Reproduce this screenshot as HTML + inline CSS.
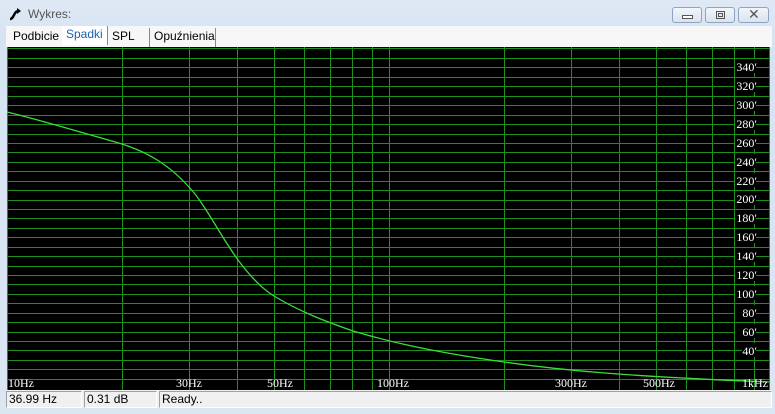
<!DOCTYPE html>
<html><head><meta charset="utf-8"><style>
*{margin:0;padding:0;box-sizing:border-box}
body{width:775px;height:414px;overflow:hidden;background:linear-gradient(#dfe9f5,#d6e3f2 40px,#dbe6f3);font-family:"Liberation Sans",sans-serif;position:relative}
.t{position:absolute;font-size:12px}
.btn{position:absolute;top:7px;height:16px;border:1px solid #8ea4c0;border-radius:3px;background:linear-gradient(#f2f6fb,#d9e3ef)}
.tabs{position:absolute;left:6px;top:26px;width:766px;height:21px;background:#f7f7f7}
.tab{position:absolute;top:2px;height:19px;font-size:12px;line-height:17px;color:#000;border-right:1px solid #888;padding:0 4px}
.status{position:absolute;left:6px;top:390px;width:766px;height:18px;background:#f0f0f0}
.sp{position:absolute;top:1px;height:17px;border:1px solid #a0a0a0;border-right-color:#fff;border-bottom-color:#fff;font-size:12px;line-height:15px;padding-left:2px}
</style></head><body>
<svg style="position:absolute;left:8px;top:7px" width="14" height="14" viewBox="0 0 14 14"><path d="M2 12 C4 12 5 10 6 8 C7 6 8 4 11 4" stroke="#000" stroke-width="2.5" fill="none"/><path d="M9 1 L13 4 L9 7 Z" fill="#000"/></svg>
<div class="t" style="left:28px;top:7px;color:#555">Wykres:</div>
<div class="btn" style="left:672px;width:30px"><div style="position:absolute;left:9px;top:7px;width:11px;height:4px;border:1px solid #555;background:#fff"></div></div>
<div class="btn" style="left:705px;width:30px"><div style="position:absolute;left:10px;top:3px;width:9px;height:8px;border:1px solid #555"></div><div style="position:absolute;left:12px;top:5px;width:5px;height:4px;border:1px solid #555"></div></div>
<div class="btn" style="left:738px;width:31px"><div style="position:absolute;left:9px;top:-2px;font-size:14px;color:#555">✕</div></div>
<div class="tabs">
<div class="tab" style="left:3px;width:53px;border-right:none">Podbicie</div>
<div class="tab" style="left:56px;top:0;width:46px;color:#1b62b0;background:#fff">Spadki</div>
<div class="tab" style="left:102px;width:42px">SPL</div>
<div class="tab" style="left:144px;width:66px">Opuźnienia</div>
</div>
<svg style="position:absolute;left:0;top:0" width="775" height="414">
<rect x="7" y="47" width="763" height="343" fill="#000"/>
<g stroke="#1c8f1c" stroke-width="1" shape-rendering="crispEdges">
<path d="M7 48.5H770 M7 58.5H770 M7 67.5H770 M7 77.5H770 M7 86.5H770 M7 96.5H770 M7 105.5H770 M7 115.5H770 M7 124.5H770 M7 134.5H770 M7 143.5H770 M7 152.5H770 M7 162.5H770 M7 171.5H770 M7 181.5H770 M7 190.5H770 M7 200.5H770 M7 209.5H770 M7 218.5H770 M7 228.5H770 M7 237.5H770 M7 247.5H770 M7 256.5H770 M7 266.5H770 M7 275.5H770 M7 284.5H770 M7 294.5H770 M7 303.5H770 M7 313.5H770 M7 322.5H770 M7 332.5H770 M7 341.5H770 M7 350.5H770 M7 360.5H770 M7 369.5H770 M7 379.5H770"/>
<path d="M7.5 47V390 M122.5 47V390 M189.5 47V390 M237.5 47V390 M274.5 47V390 M304.5 47V390 M330.5 47V390 M352.5 47V390 M372.5 47V390 M389.5 47V390 M504.5 47V390 M571.5 47V390 M619.5 47V390 M656.5 47V390 M686.5 47V390 M712.5 47V390 M734.5 47V390 M754.5 47V390 M769.5 47V390"/>
</g>
<g font-family="Liberation Serif,serif" font-size="12" fill="#fff">
<g fill="#000"><rect x="735" y="59" width="21" height="14"/><rect x="735" y="78" width="21" height="14"/><rect x="735" y="97" width="21" height="14"/><rect x="735" y="116" width="21" height="14"/><rect x="735" y="135" width="21" height="14"/><rect x="735" y="154" width="21" height="14"/><rect x="735" y="173" width="21" height="14"/><rect x="735" y="191" width="21" height="14"/><rect x="735" y="210" width="21" height="14"/><rect x="735" y="229" width="21" height="14"/><rect x="735" y="248" width="21" height="14"/><rect x="735" y="267" width="21" height="14"/><rect x="735" y="286" width="21" height="14"/><rect x="735" y="305" width="21" height="14"/><rect x="735" y="324" width="21" height="14"/><rect x="742" y="343" width="14" height="14"/></g>
<g text-anchor="end">
<text x="757" y="71">340′</text><text x="757" y="90">320′</text><text x="757" y="109">300′</text><text x="757" y="128">280′</text><text x="757" y="147">260′</text><text x="757" y="166">240′</text><text x="757" y="185">220′</text><text x="757" y="203">200′</text><text x="757" y="222">180′</text><text x="757" y="241">160′</text><text x="757" y="260">140′</text><text x="757" y="279">120′</text><text x="757" y="298">100′</text><text x="757" y="317">80′</text><text x="757" y="336">60′</text><text x="757" y="355">40′</text>
</g>
</g>
<path d="M7 112 C40 120 80 132 122 144 C150 153 170 166 189 187 C205 204 218 232 238 260 C250 276 262 289 274 296 C300 312 330 323 353 331 C380 339 420 350 504 362 C560 370 620 376 769 382" stroke="#3bdc3b" stroke-width="1.3" fill="none"/>
<g font-family="Liberation Serif,serif" font-size="12" fill="#fff">
<text x="8" y="387">10Hz</text><text x="176" y="387">30Hz</text><text x="267" y="387">50Hz</text><text x="377" y="387">100Hz</text><text x="555" y="387">300Hz</text><text x="643" y="387">500Hz</text><text x="742" y="387">1kHz</text>
</g>
</svg>
<div class="status">
<div class="sp" style="left:0;width:76px">36.99 Hz</div>
<div class="sp" style="left:78px;width:73px">0.31 dB</div>
<div class="sp" style="left:153px;width:613px">Ready..</div>
</div>
</body></html>
